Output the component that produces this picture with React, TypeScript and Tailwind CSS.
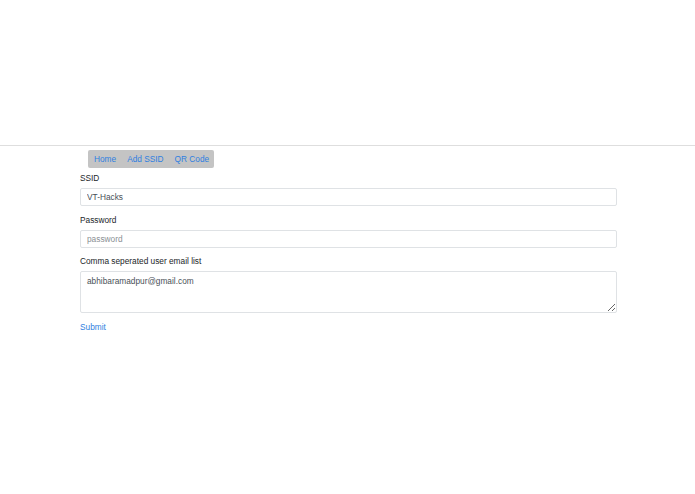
export default function App() {
  return (
    <div className="min-h-screen bg-white font-['Liberation_Sans',Arial,sans-serif] text-[8.3px] text-[#212529]">
      <div className="h-[146px] border-b border-[#dedede]" />
      <div className="pl-[80px] pr-[78px]">
        <nav className="ml-[8px] mt-[4px] inline-flex h-[18px] items-center gap-[11px] whitespace-nowrap rounded-[2px] bg-[#c4c4c4] pl-[6px] pr-[5px] text-[#2f7fe0]">
          <a href="#">Home</a>
          <a href="#">Add SSID</a>
          <a href="#">QR Code</a>
        </nav>
        <form className="mt-[4px] flex flex-col">
          <label className="leading-[12px]">SSID</label>
          <input
            className="mt-[4px] h-[18px] rounded-[2px] border border-[#dfe2e5] px-[6px] leading-[16px] text-[#495057] outline-none"
            defaultValue="VT-Hacks"
          />
          <label className="mt-[8px] leading-[12px]">Password</label>
          <input
            className="mt-[4px] h-[18px] rounded-[2px] border border-[#dfe2e5] px-[6px] leading-[16px] text-[#495057] placeholder:text-[#8a8f94] outline-none"
            placeholder="password"
          />
          <label className="mt-[7px] leading-[12px]">Comma seperated user email list</label>
          <textarea
            className="mt-[4px] h-[42px] resize-y rounded-[2px] border border-[#dfe2e5] px-[6px] py-[3px] leading-[12px] text-[#495057] outline-none"
            defaultValue="abhibaramadpur@gmail.com"
          />
          <div className="mt-[8px] leading-[12px]">
            <button type="button" className="text-[#2f7fe0]">Submit</button>
          </div>
        </form>
      </div>
    </div>
  );
}
